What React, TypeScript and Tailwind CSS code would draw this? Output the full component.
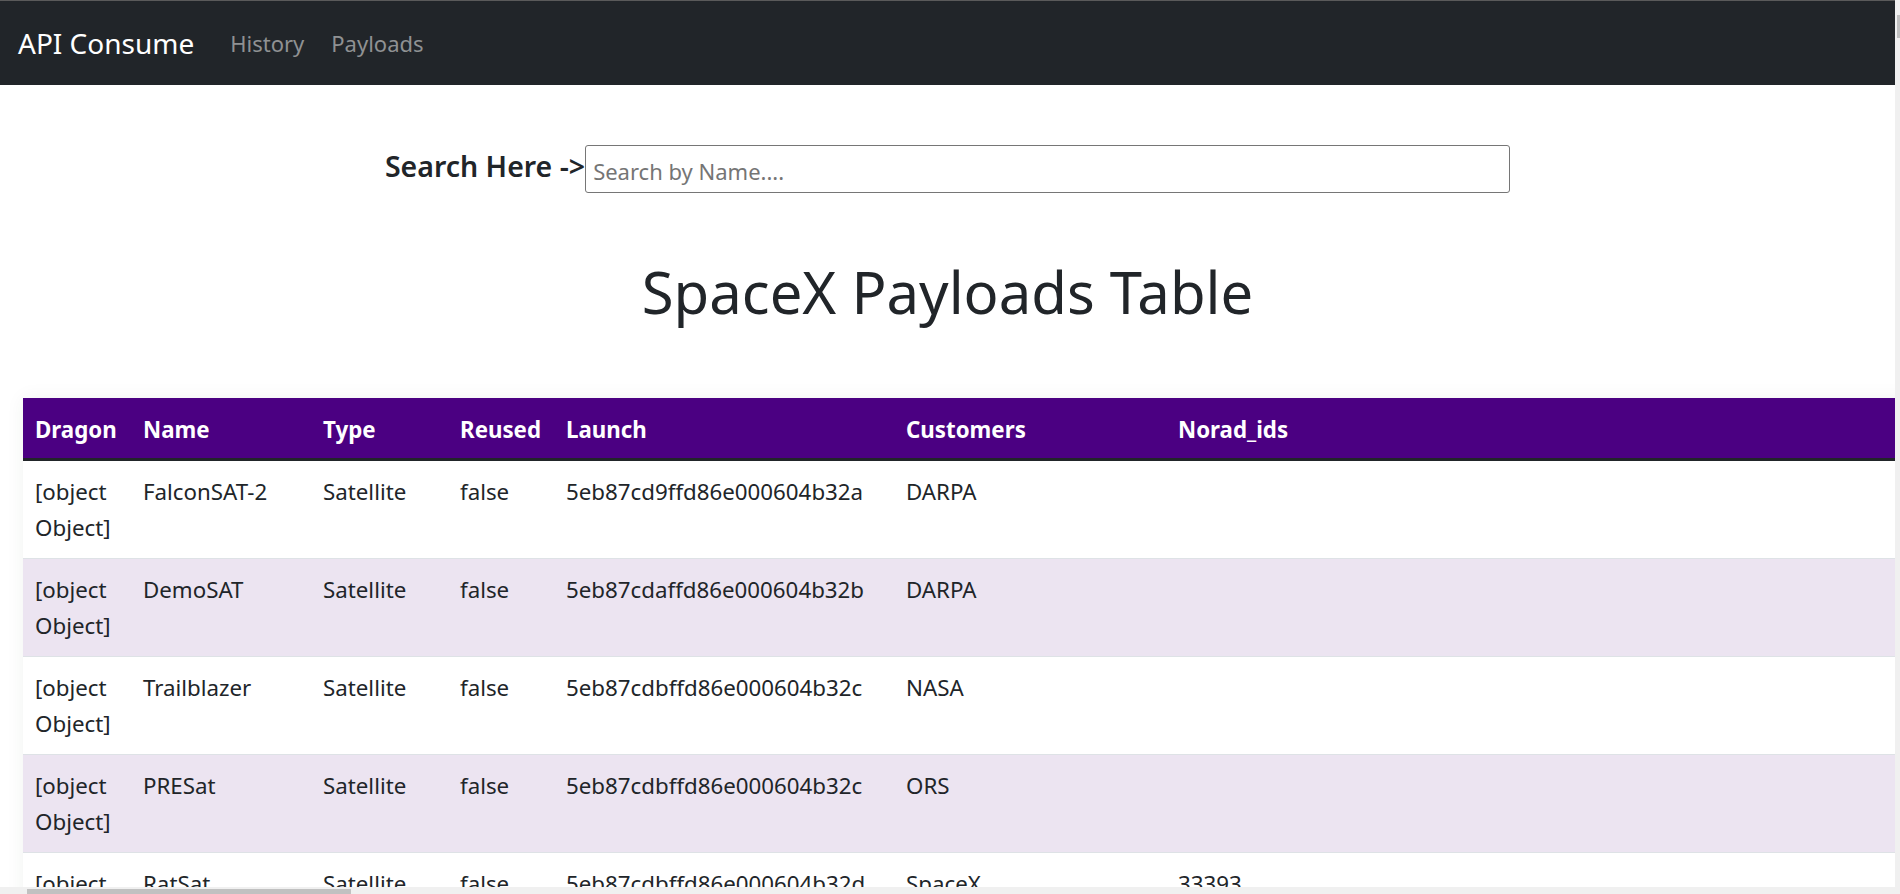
const payloads = [
  { name: "FalconSAT-2", type: "Satellite", reused: false, launch: "5eb87cd9ffd86e000604b32a", customers: "DARPA", norad: "" },
  { name: "DemoSAT", type: "Satellite", reused: false, launch: "5eb87cdaffd86e000604b32b", customers: "DARPA", norad: "" },
  { name: "Trailblazer", type: "Satellite", reused: false, launch: "5eb87cdbffd86e000604b32c", customers: "NASA", norad: "" },
  { name: "PRESat", type: "Satellite", reused: false, launch: "5eb87cdbffd86e000604b32c", customers: "ORS", norad: "" },
  { name: "RatSat", type: "Satellite", reused: false, launch: "5eb87cdbffd86e000604b32d", customers: "SpaceX", norad: "33393" },
  { name: "RazakSAT", type: "Satellite", reused: false, launch: "5eb87cdcffd86e000604b32e", customers: "ATSB", norad: "35578" },
  { name: "Dragon Qualification Unit", type: "Dragon Boilerplate", reused: false, launch: "5eb87cddffd86e000604b32f", customers: "SpaceX", norad: "36595" },
  { name: "COTS Demo Flight 1", type: "Dragon 1.0", reused: false, launch: "5eb87cdeffd86e000604b330", customers: "NASA(COTS)", norad: "37244" },
];

const headers = ["Dragon", "Name", "Type", "Reused", "Launch", "Customers", "Norad_ids"];

export default function App() {
  return (
    <div className="relative h-screen w-full overflow-hidden bg-white font-['Noto_Sans',sans-serif] text-[#212529]">
      <div className="h-full w-[1895px] overflow-hidden">
        <nav className="h-[85px] bg-[#212529] border-t border-[#5a5a5a] flex items-center px-[18px]">
          <a className="text-[28px] text-white mr-[36px] leading-none">API Consume</a>
          <div className="flex items-center gap-[27px]">
            <a className="text-[22px] text-[#8f9193] leading-none">History</a>
            <a className="text-[22px] text-[#8f9193] leading-none">Payloads</a>
          </div>
        </nav>

        <div className="flex justify-center items-center pt-[60px]">
          <label className="text-[28.5px] font-semibold leading-none mb-[6px]">Search Here -&gt;</label>
          <input
            placeholder="Search by Name...."
            className="w-[925px] h-[48px] border border-[#767676] rounded-[3px] px-[7px] pt-[3px] text-[22px] placeholder:text-[#757575] outline-none"
          />
        </div>

        <h1 className="text-center text-[58px] leading-none mt-[70px] mb-[77px]">SpaceX Payloads Table</h1>

        <div className="pl-[23px]">
          <table className="table-fixed w-[10900px] border-collapse text-[22.3px] leading-[36px] shadow-[0_0_18px_rgba(0,60,0,0.06)]">
            <colgroup>
              <col className="w-[108px]" />
              <col className="w-[180px]" />
              <col className="w-[137px]" />
              <col className="w-[106px]" />
              <col className="w-[340px]" />
              <col className="w-[272px]" />
              <col />
            </colgroup>
            <thead>
              <tr className="bg-[#4b0082] text-white border-b-[3px] border-[#212529]">
                {headers.map((h) => (
                  <th key={h} className="text-left font-bold px-[12px] pt-[14px] pb-[10px]">{h}</th>
                ))}
              </tr>
            </thead>
            <tbody>
              {payloads.map((p, i) => (
                <tr key={i} className={`border-b border-[#dee2e6] align-top ${i % 2 === 1 ? "bg-[#ece4f1]" : "bg-white"}`}>
                  <td className="px-[12px] pt-[13px] pb-[12px]">[object Object]</td>
                  <td className="px-[12px] pt-[13px] pb-[12px]">{p.name}</td>
                  <td className="px-[12px] pt-[13px] pb-[12px]">{p.type}</td>
                  <td className="px-[12px] pt-[13px] pb-[12px]">{String(p.reused)}</td>
                  <td className="px-[12px] pt-[13px] pb-[12px]">{p.launch}</td>
                  <td className="px-[12px] pt-[13px] pb-[12px]">{p.customers}</td>
                  <td className="px-[12px] pt-[13px] pb-[12px]">{p.norad}</td>
                </tr>
              ))}
            </tbody>
          </table>
        </div>
      </div>

      {/* window scrollbars */}
      <div className="absolute right-0 top-0 h-full w-[5px] bg-[#f0f0f0]">
        <div className="mt-[15px] ml-[2px] h-[23px] w-[3px] bg-[#c1c1c1]" />
      </div>
      <div className="absolute left-0 bottom-0 h-[7px] w-[1895px] bg-[#f0f0f0]">
        <div className="ml-[27px] mt-[2px] h-[5px] w-[324px] bg-[#c1c1c1]" />
      </div>
    </div>
  );
}
